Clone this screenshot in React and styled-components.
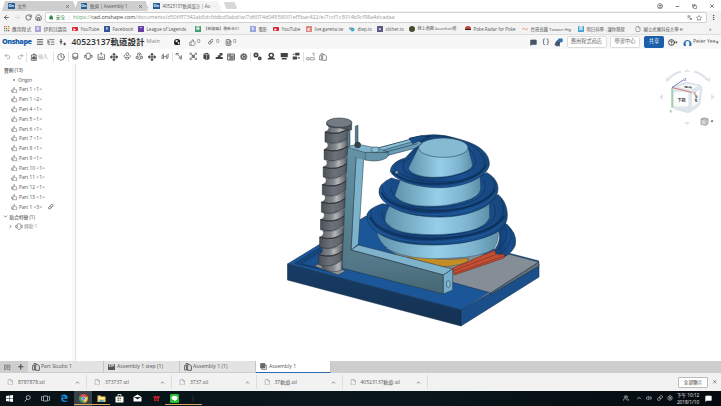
import React from "react";
import styled, { createGlobalStyle } from "styled-components";
import {
  ArrowLeft, ArrowRight, RotateCw, House, Lock, Star, EllipsisVertical, CircleUser, Minus, Copy, X,
  Menu, ListTree, Globe, ThumbsUp, Link, File, FileText, MessageSquare, Braces, CircleQuestionMark,
  Undo2, Redo2, Clock, Move, Settings, Cog, ChevronDown, ChevronRight, ChevronUp, Plus, Search,
  Volume2, Languages, Users,
} from "lucide-react";

const sans = `"Open Sans", "Noto Sans CJK TC", sans-serif`;

const Global = createGlobalStyle`
  * { box-sizing: border-box; }
  html, body { margin: 0; width: 721px; height: 406px; overflow: hidden; }
  body { font-family: ${sans}; font-size: 5.3px; line-height: 1; color: #444; background: #fff; }
`;

const Page = styled.div`
  width: 721px; height: 406px; display: flex; flex-direction: column; overflow: hidden; background: #fff;
`;
const Row = styled.div`
  display: flex; align-items: center; flex: none; white-space: nowrap;
`;
const Slot = styled.div`
  flex: none; width: ${p => p.$w}px; display: flex; align-items: center;
  justify-content: ${p => (p.$center ? "center" : "flex-start")};
  svg { flex: none; }
`;
const Label = styled.span`
  font-size: ${p => p.$size || 5}px; color: ${p => p.$color || "#555"};
  font-weight: ${p => p.$weight || 400}; letter-spacing: ${p => p.$track || 0}px; white-space: nowrap;
`;

/* Browser window */
const TabStrip = styled(Row)` height: 11px; align-items: flex-end; padding-left: 2px; `;
const BrowserTab = styled.div`
  width: 75px; height: 10px; margin-right: -2.5px; padding: 0 7px 0 6px;
  display: flex; align-items: center; gap: 3px;
  background: ${p => (p.$active ? "#f4f4f4" : "#cecece")};
  clip-path: polygon(3px 0, calc(100% - 4px) 0, 100% 100%, 0 100%);
  svg:last-child { margin-left: auto; }
`;
const NewTab = styled.div`
  width: 11px; height: 7px; margin: 0 0 2px 5px; background: #d8d8d8; transform: skewX(20deg); border-radius: 1px;
`;
const WindowControls = styled.div`
  margin-left: auto; height: 10px; display: flex; align-items: center; gap: 12px; padding-right: 6px; color: #333;
`;
const AddressRow = styled(Row)` height: 13px; background: #f3f3f3; padding-left: 3px; color: #444; `;
const AddressField = styled.div`
  width: 662px; height: 11px; display: flex; align-items: center; gap: 2.4px; padding: 0 4px 0 2.5px;
  border: 1px solid #d2d2d2; border-radius: 2px; background: #fff;
`;
const FieldEnd = styled.div` margin-left: auto; display: flex; gap: 4px; align-items: center; `;
const BookmarkRow = styled(Row)` height: 11px; background: #f3f3f3; border-bottom: 1px solid #ddd; padding-left: 4px; `;

const Favicon = styled.span`
  flex: none; width: ${p => p.$s || 5.5}px; height: ${p => p.$h || p.$s || 5.5}px; margin-right: ${p => p.$gap ?? 3}px;
  border-radius: ${p => p.$r ?? 0.5}px; background: ${p => p.$c}; color: ${p => p.$fg || "#fff"};
  display: flex; align-items: center; justify-content: center; font-size: ${p => p.$fs || 4}px; font-weight: 700;
`;

/* Application chrome */
const AppHeader = styled(Row)` height: 14px; background: #f7f7f7; padding-left: 2px; color: #333; `;
const Brand = styled.div` width: 34px; font-size: 7.3px; font-weight: 800; letter-spacing: -0.5px; color: #1b5faa; `;
const HeaderButton = styled.div`
  flex: none; width: ${p => p.$w}px; height: 12px; margin-right: ${p => p.$mr || 0}px; border-radius: 1.5px;
  border: 1px solid ${p => (p.$primary ? "#1b5faa" : "#dcdcdc")};
  background: ${p => (p.$primary ? "#1b5faa" : "#fff")}; color: ${p => (p.$primary ? "#fff" : "#666")};
  display: flex; align-items: center; justify-content: center; font-size: 5.2px;
`;
const ToolRow = styled(Row)` height: 15px; background: #fff; color: #444; `;
const Rule = styled.span` flex: none; width: 1px; height: 10px; background: #e2e2e2; `;

const Work = styled.div` height: 297px; flex: none; display: flex; `;
const Sidebar = styled.aside`
  width: 76px; flex: none; padding-top: 1.5px; border-right: 1px solid #e0e0e0; box-shadow: inset -3px 0 #f7f9fb;
  display: flex; flex-direction: column;
`;
const TreeRow = styled.div`
  height: 9.78px; flex: none; display: flex; align-items: center; gap: 1.5px; padding-left: ${p => p.$indent}px;
  white-space: nowrap;
`;
const OriginDot = styled.span` width: 2px; height: 2px; border-radius: 50%; background: #888; margin-right: 1.5px; `;
const RowMark = styled.span` margin-left: 5px; display: flex; `;
const Viewport = styled.main` flex: 1; min-width: 0; svg { display: block; } `;

const SheetTabs = styled(Row)` height: 12px; background: #cecece; `;
const SheetTab = styled.div`
  width: ${p => p.$w}px; height: 12px; display: flex; align-items: center; gap: 1px; padding-left: 4px; flex: none;
  background: ${p => (p.$active ? "#fff" : "#e3e3e3")}; color: #444;
  border-right: 1px solid #c6c6c6; border-bottom: ${p => (p.$active ? "1.5px solid #2c69ad" : "1px solid #cfcfcf")};
`;
const DownloadBar = styled(Row)` height: 18px; background: #f2f2f2; `;
const Download = styled.div`
  width: ${p => p.$w}px; height: 14px; flex: none; padding: 0 6px 0 7px; display: flex; align-items: center;
  gap: 4.5px; border-right: 1px solid #ddd; color: #777;
  svg:last-child { margin-left: auto; color: #444; }
`;
const ShowAll = styled.div`
  width: 30px; height: 11px; margin: 0 4px 0 auto; border: 1px solid #bbb; border-radius: 1px; background: #fff;
  display: flex; align-items: center; justify-content: center;
`;
const Taskbar = styled(Row)` height: 15px; background: linear-gradient(90deg, #081217, #0a171d 55%, #040a0f); color: #eee; `;
const TaskSlot = styled.div`
  flex: none; width: ${p => p.$w}px; height: 15px; display: flex; align-items: center; justify-content: center;
  background: ${p => (p.$active ? "#3a4247" : "transparent")};
  border-bottom: 1px solid transparent;
  box-shadow: ${p => (p.$open ? "inset 0 -1px #d6a25a" : "none")};
`;
const Tray = styled.div` margin-left: auto; height: 15px; display: flex; align-items: center; `;
const ClockText = styled.div` width: 28px; font-size: 4.7px; line-height: 7px; text-align: center; color: #eee; `;

const PartIcon = ({ s = 6.5, w = 2 }) => (
  <svg width={s} height={s} viewBox="0 0 24 24" fill="none" stroke="#666" strokeWidth={w}>
    <path d="M2 11h6v6H2z M8 11V5l5-4v8l8 2v10H5v-4" />
  </svg>
);
const InsertIcon = () => (
  <svg width="8" height="8" viewBox="0 0 24 24" fill="none" stroke="#444" strokeWidth="2.2">
    <path d="M8 6H4v16h15V6h-4 M12 18V2 M8 6l4-4 4 4" /><path d="M8 12h8v6H8z" fill="#777" />
  </svg>
);
const PagesIcon = ({ color = "#444" }) => (
  <svg width="8" height="8" viewBox="0 0 24 24" fill="none" stroke={color} strokeWidth="2.5">
    <path d="M2 8h6v13H2z M11 5h7l4 4v13H11z M6 6V2h7" />
  </svg>
);
const AssemblyIcon = () => (
  <svg width="7" height="7" viewBox="0 0 24 24" fill="#777" stroke="#444" strokeWidth="2">
    <path d="M2 2h15v15H2z" /><path d="M6 17v5h16V7h-5 M6 7h7 M6 12h7" fill="none" />
  </svg>
);

const mates = {
  cup: "M5 5v10q0 6 7 6t7-6V5 M5 13q7 5 14 0 M5 5q7-4 14 0 M5 17h14",
  ring: "M5 10q0-7 7-7t7 7 M1 10h6v5H1z M17 10h6v5h-6z M7 17v3h10v-3 M12 17v5",
  bracket: "M6 7H3v14h18V7h-3 M12 2v8 M9 5l3-3 3 3 M8 13v4h8v-4",
  ball: "M12 2a4 4 0 1 1 0 8 4 4 0 0 1 0-8 M6 8l-4 4 4 4 M18 8l4 4-4 4 M7 15q0 6 5 6t5-6z",
  slot: "M7 10V5q5-5 10 0v5 M12 5v7 M3 13h6v5H3z M15 13h6v5h-6z M9 21h6",
  tangent: "M3 20V9l4-3v14 M20 4v12l-4 3V8 M7 15l9-4",
  flow: "M3 4h8 M3 4v5 M4 5l14 12 M18 9v8h-8 M17 17v5",
  frame: "M3 8V3h5 M16 3h5v5 M21 16v5h-5 M8 21H3v-5 M5 5l14 14 M19 5L5 19 M9 9h6v6H9z",
};
const solids = {
  cube: "M4 5l11-3 6 4v14l-8 3-9-5z",
  steps: "M2 14h6V9h5V3h8v7h-5v4h6v6H2z",
  stamp: "M12 2a7 7 0 0 1 6 12l-1 3h5v4H2v-4h5l-1-3a7 7 0 0 1 6-12z",
  screen: "M2 3h20v12H2z M5 17h14v4H5z",
  swap: "M9 2h12v8H9z M2 13h12v8H2z M2 5h5v3H2z M16 15h6v3h-6z",
};
const ToolGlyph = ({ name }) => {
  if (name === "table") return (
    <svg width="8" height="8" viewBox="0 0 24 24" fill="none" stroke="#444" strokeWidth="2.6"><path d="M2 3h20v18H2z M2 9h20 M9 3v18 M15 9v12 M9 15h13" /></svg>
  );
  return solids[name] ? (
    <svg width="8.5" height="8.5" viewBox="0 0 24 24">
      <path d={solids[name]} fill="#444" />
      {name === "stamp" && <circle cx="12" cy="9" r="3.5" fill="#fff" />}
      {name === "cube" && <path d="M4 5l9 3v15 M13 8l8-2" stroke="#ddd" fill="none" strokeWidth="2" />}
    </svg>
  ) : (
    <svg width="8.5" height="8.5" viewBox="0 0 24 24" fill="none" stroke="#555" strokeWidth="2.1"><path d={mates[name]} /></svg>
  );
};

const bookmarks = [
  [31, "", "應用程式", 4.8, "apps"], [37, "#a9a2da", "伊莉討論區", 4.7, "E"],
  [32, "#d9232e", "YouTube", 4.6, "play"], [34, "#31549d", "Facebook", 4.7, "f"],
  [57, "#6441a5", "League of Legends", 4.55, "▪"], [55, "#3e9a70", "【新護腦】最新谷01", 3.95, "谷"],
  [23, "#9aa5de", "電影", 4.3, "E"], [33, "#d9232e", "YouTube", 4.6, "play"],
  [43, "#dc8683", "live.garena.tw", 4.45, "g"], [28, "#3caed0", "diep.io", 4.5, "tank"], [32, "#595887", "slither.io", 4.5, "s"],
  [56, "#494d30", "線上遊戲-beanfun!遊", 4.1, "round"], [57, "", "Poke Radar for Poke", 4.45, "ball"],
  [56, "transparent", "台灣高鐵 Taiwan Hig", 4.35, "hsr"], [57, "#49a3cf", "明日科學 - 讓你隨探", 4.35, "目"],
];

const BookmarkIcon = ({ kind, color }) => {
  if (kind === "apps") return (
    <Slot $w={8}>
      <svg width="5.5" height="5.5" viewBox="0 0 11 11">
        {["#d94b3e", "#e8aa3c", "#53a653", "#5387ce", "#d94b3e", "#e8aa3c", "#53a653", "#5387ce", "#d94b3e"].map((c, i) =>
          <rect key={i} x={(i % 3) * 4} y={Math.floor(i / 3) * 4} width="2.6" height="2.6" fill={c} />)}
      </svg>
    </Slot>
  );
  if (kind === "play") return (
    <Favicon $c={color} $h={4.5} $r={1}><svg width="3" height="3" viewBox="0 0 6 6"><path d="M1 0l5 3-5 3z" fill="#fff" /></svg></Favicon>
  );
  if (kind === "tank") return <Slot $w={8.5}><svg width="6" height="5" viewBox="0 0 12 10"><path d="M0 1h6v4H0z" fill="#999" /><circle cx="7" cy="5" r="4" fill={color} /></svg></Slot>;
  if (kind === "hsr") return <Slot $w={8.5}><svg width="6" height="5" viewBox="0 0 12 10"><path d="M0 5q3-4 6-1t6-1" fill="none" stroke="#e0825f" strokeWidth="1.5" /></svg></Slot>;
  if (kind === "ball") return <Favicon $c="linear-gradient(#c34237 45%, #222 45%, #222 60%, #eee 60%)" $r={3} />;
  if (kind === "round") return <Favicon $c={color} $r={3} />;
  return <Favicon $c={color}>{kind}</Favicon>;
};

const parts = ["Part 1 <1>", "Part 1 <2>", "Part 4 <1>", "Part 5 <1>", "Part 6 <1>", "Part 7 <1>", "Part 8 <1>", "Part 9 <1>",
  "Part 10 <1>", "Part 11 <1>", "Part 12 <1>", "Part 13 <1>", "Part 1 <3>"];

const tools = [
  [13, "cup"], [13, "ring"], [12.5, "bracket"], [13, "move"], [12.5, "ball"], [12.5, "slot"], [13, "move"], [13, "tangent"],
  [1, "|"], [13.5, "flow"], [13.5, "frame"], [13, "cube"], [12.5, "steps"], [12.5, "table"], [12.5, "cog"],
  [1, "|"], [13.5, "gears"], [13, "stamp"], [12.5, "screen"], [12.5, "swap"], [1, "|"],
];

const threads = Array.from({ length: 8 }, (_, i) => ({ y: 66 + i * 52.6, l: 135 - i * 2.7, r: 209 - i * 2.7 }));

const Model = () => (
  <svg width="645" height="297" viewBox="76 64 645 297">
    <defs>
      <linearGradient id="cone"><stop offset="0" stopColor="#5f93ab" /><stop offset=".25" stopColor="#7bb0c9" /><stop offset=".5" stopColor="#96cee9" /><stop offset=".8" stopColor="#7db3ce" /><stop offset="1" stopColor="#5c90a8" /></linearGradient>
      <linearGradient id="ring"><stop offset="0" stopColor="#1a5292" /><stop offset=".3" stopColor="#144179" /><stop offset=".72" stopColor="#184f90" /><stop offset="1" stopColor="#16467e" /></linearGradient>
      <linearGradient id="steel"><stop offset="0" stopColor="#4b4f55" /><stop offset=".45" stopColor="#6d727a" /><stop offset=".8" stopColor="#62676f" /><stop offset="1" stopColor="#43474e" /></linearGradient>
      <linearGradient id="core"><stop offset="0" stopColor="#55585d" /><stop offset=".45" stopColor="#85888d" /><stop offset=".62" stopColor="#b4b6b9" /><stop offset="1" stopColor="#505358" /></linearGradient>
      <linearGradient id="post" x2="0" y2="1"><stop offset="0" stopColor="#6593a7" /><stop offset="1" stopColor="#507582" /></linearGradient>
      <linearGradient id="beam" x2="0" y2="1"><stop offset="0" stopColor="#587f8f" /><stop offset="1" stopColor="#466774" /></linearGradient>
      <linearGradient id="front" x2="0" y2="1"><stop offset="0" stopColor="#173c66" /><stop offset="1" stopColor="#153152" /></linearGradient>
    </defs>
    <g strokeLinejoin="round" stroke="#102e4c" strokeWidth=".55">
      <path d="M287.5 264L366 216L539 261L461 310z" fill="#1b5798" />
      <path d="M287.5 264L461 310V326L287.5 280z" fill="url(#front)" />
      <path d="M461 310L539 264V277L461 326z" fill="#1b4f89" />
      <path d="M295 263.5L321 247L331 249V272z" fill="#18477c" />
      <path d="M301 264L321 251V268z" fill="#1a5090" />
      <path d="M314 266l8-4 24 9-8 4z" fill="#8f9395" />
      <path d="M385 248l10-4 45 12 65-3 34 9-48 31-54-15z" fill="#858e96" />
      <path d="M491 293l48-31v4l-49 29z" fill="#686f76" />
    </g>

    <g transform="translate(360 125) scale(.33333)" stroke="#102b44" strokeWidth="1.6" strokeLinejoin="round">
      <path d="M142 389Q230 410 326 400L321 412Q270 430 224 422L145 397z" fill="#c58e24" strokeWidth="1" />
      <path d="M430 290Q476 323 465 363Q456 384 430 397L401 377Q427 348 414 310z" fill="url(#ring)" />
      <path d="M441 297Q474 345 421 388 M432 300Q458 340 407 379" fill="none" />
      <path d="M50 317Q53 350 88 374Q150 407 260 400Q370 397 402 371Q418 349 415 312z" fill="url(#cone)" strokeWidth="1" />
      <path d="M278 430L403 376L410 390L434 387L432 399L283 450z" fill="#c04f35" stroke="#682616" />
      <path d="M278 438L409 388 M281 446L431 393" fill="none" stroke="#7d2a19" />

      <path d="M67 236Q14 254 21 279C27 318 82 348 157 357C278 370 405 342 433 302C450 280 443 231 415 209L350 222L98 241z" fill="url(#ring)" />
      <path d="M30 276C49 325 142 346 230 342C325 340 409 316 432 272" fill="none" stroke="#0e3360" strokeWidth="6" />
      <path d="M34 257C26 303 101 337 205 338C308 342 404 314 424 277Q437 250 424 222" fill="none" strokeWidth="1.6" />
      <path d="M26 288C49 335 142 355 230 351C325 349 409 325 434 286" fill="none" stroke="#255f9e" strokeWidth="2.4" />
      <path d="M66 259C65 303 121 331 213 331C300 332 374 315 398 284Q412 263 402 239" fill="#174c89" />
      <path d="M89 242Q75 263 75 287Q91 318 158 326Q251 335 328 318Q378 306 389 277L388 230z" fill="url(#cone)" strokeWidth="1" />

      <path d="M94 159Q54 177 57 203C61 235 115 265 184 273C275 285 369 264 402 222C425 194 414 162 381 143L337 158L123 167z" fill="url(#ring)" />
      <path d="M64 202C80 241 155 260 225 259C304 260 386 232 405 193" fill="none" stroke="#0e3360" strokeWidth="6" />
      <path d="M68 183C65 222 128 251 206 254C293 260 374 237 397 205Q413 182 397 156" fill="none" strokeWidth="1.6" />
      <path d="M61 211C83 253 155 271 225 269C304 270 386 242 407 205" fill="none" stroke="#255f9e" strokeWidth="2.4" />
      <path d="M93 188C97 226 148 247 220 247C291 248 359 231 373 199Q379 182 371 167" fill="#174d88" />
      <path d="M121 164L104 212Q126 239 187 243Q258 247 315 228Q357 217 362 193L360 147z" fill="url(#cone)" strokeWidth="1" />

      <path d="M149 40Q228 17 292 42C355 55 390 85 388 119C382 156 315 187 238 188C157 188 101 161 91 139Q91 112 137 98L177 55z" fill="url(#ring)" />
      <path d="M98 140C119 165 175 178 238 177C310 176 366 150 379 120" fill="none" stroke="#0e3360" strokeWidth="5" />
      <path d="M172 38Q285 19 347 69Q394 108 361 139C320 172 231 179 170 163Q113 150 104 130Q104 115 134 106" fill="none" strokeWidth="1.6" />
      <path d="M95 146C120 173 176 186 238 185C312 184 370 156 384 124" fill="none" stroke="#255f9e" strokeWidth="2" />
      <path d="M149 101Q118 113 136 141C183 171 299 159 338 130Q360 102 326 70" fill="#174d88" />
      <path d="M176 67L145 130Q151 148 194 155Q247 161 294 147Q333 137 338 121L324 67z" fill="url(#cone)" strokeWidth="1" />
      <ellipse cx="250" cy="68" rx="74" ry="29" fill="#86bad3" strokeWidth="1.5" />
      <circle cx="110" cy="142" r="4.5" fill="#aab8bd" />
      <path d="M47 71L152 43L176 46L186 56L165 70L80 92L48 83z" fill="#6c9eb5" />
      <path d="M47 71L152 43L158 50L54 80z" fill="#8abfd6" />
      <path d="M66 84L172 56" fill="none" />
      <path d="M147 40L184 32L207 36L158 56z" fill="#174d88" />
    </g>

    <g transform="translate(280 110) scale(.33333)" stroke="#26343e" strokeWidth="1.6" strokeLinejoin="round">
      <path d="M153 48L203 52L185 479Q158 495 126 473z" fill="url(#core)" />
      {threads.map((t, i) => (
        <g key={i}>
          <path d={`M${t.l + 9} ${t.y - 20}Q${t.l + 40} ${t.y - 12} ${t.r - 5} ${t.y - 28}L${t.r} ${t.y - 12}Q${t.l + 38} ${t.y + 12} ${t.l} ${t.y}Q${t.l + 17} ${t.y - 8} ${t.l + 9} ${t.y - 20}z`} fill="url(#core)" strokeWidth=".7" />
          <path d={`M${t.l} ${t.y}Q${t.l + 43} ${t.y + 13} ${t.r} ${t.y - 13}L${t.r - 3} ${t.y + 15}Q${t.l + 39} ${t.y + 42} ${t.l} ${t.y + 30}z`} fill="url(#steel)" />
          <path d={`M${t.l} ${t.y}Q${t.l + 43} ${t.y + 13} ${t.r} ${t.y - 13}`} fill="none" stroke="#303338" strokeWidth="3" />
        </g>
      ))}
      <path d="M140 38V45Q153 54 180 54L215 60V38z" fill="#4f545c" />
      <ellipse cx="178" cy="38" rx="38" ry="14" fill="#737b83" />
      <path d="M202 65l8-5v52h-8z M226 49l8-3v55h-8z" fill="#547f94" />
      <path d="M228 142L251 147L235 402L212 422z" fill="#7db2cb" />
      <path d="M203 112L257 127L255 150L228 142L215 422L188 475L186 463z" fill="url(#post)" stroke="none" />
      <path d="M203 112L186 463L188 475 M228 142L213 422" fill="none" />
      <path d="M203 112L216 106L240 104L285 113L325 126L257 128z" fill="#81b5cd" />
      <path d="M257 127H325V138Q314 153 278 153L255 150z" fill="#6494aa" />
      <path d="M273 118L280 111H293L298 119L292 127H278z" fill="#8abed5" />
      <circle cx="233" cy="105" r="9" fill="#394149" />
      <path d="M213 420L235 405L518 477L490 495z" fill="#7fb2cb" />
      <path d="M188 475L213 420L490 495V552L190 475z" fill="url(#beam)" stroke="none" />
      <path d="M213 420L490 495V552L188 475" fill="none" />
      <path d="M490 495L518 477V540L490 552z" fill="#77aeca" />
      <ellipse cx="505" cy="522" rx="6" ry="10" fill="#8abed5" />
    </g>

    <g fill="none" stroke="#dce3ea" strokeWidth="2.2">
      <path d="M668 80Q672 74 681 71.5 M694 71.5Q703 74 707 80" />
    </g>
    <g fill="#dfe6eb">
      <path d="M687 69l3 3h-6z M687 125l3-3h-6z M659 97l4-3v6z M715 97l-4-3v6z M666 77v5l4-2z M710 77v5l-4-2z" />
      <path d="M672 88q0-1 3-2l11-4 14 3q2 1 2 4l-2 15q-1 2-4 4l-6 4q-2 1-5 0l-10-3q-3-1-3-4z" stroke="#ccd5db" strokeWidth=".5" />
      <rect x="674" y="92" width="14.5" height="14.5" rx="2" fill="#fbfcfc" />
      <path d="M692 94l8-4-2 13-6 4z M678 87l9-3 11 2-7 4z" fill="#fbfcfc" />
    </g>
    <path d="M672 88v20" stroke="#42ad4e" strokeWidth=".7" /><path d="M672 87.5l20 5" stroke="#c64842" strokeWidth=".7" /><path d="M672 87.5l12-8" stroke="#4750b7" strokeWidth=".7" />
    <g fontFamily={sans} fontWeight="600" fontSize="4">
      <text x="677.5" y="101.5" fill="#333">下視</text>
      <text transform="translate(684 87.5) rotate(6) scale(1 .55)" fill="#333">後視</text>
      <text transform="translate(695.3 98) rotate(-10) scale(.6 1)" fill="#333">右</text>
      <text transform="translate(695 102) rotate(-10) scale(.6 1)" fill="#333">視</text>
      <text x="693.5" y="95" fill="#c64842">X</text><text x="669.5" y="112.5" fill="#42ad4e">Y</text><text x="684" y="80.5" fill="#4750b7">Z</text>
    </g>
    <path d="M701 119l3-1.2 4 1v5l-2 1.5-5-1z" fill="#d5d6d6" stroke="#777" strokeWidth=".6" />
    <path d="M701 119l5 1v5 M706 120l2-1.2" fill="none" stroke="#888" strokeWidth=".5" />
    <path d="M710.5 120.5h3l-1.5 2z" fill="#555" />
  </svg>
);

const OnLogo = () => <Favicon $c="#206099" $s={6.5} $gap={0} $fs={3.8}>On</Favicon>;

export default function App() {
  return (
    <Page>
      <Global />
      <TabStrip>
        <BrowserTab><OnLogo /><Label $size={4.5}>文件</Label><X size={5} strokeWidth={2.5} /></BrowserTab>
        <BrowserTab><OnLogo /><Label $size={4.5}>軌道 | Assembly 1</Label><X size={5} strokeWidth={2.5} /></BrowserTab>
        <BrowserTab $active><OnLogo /><Label $size={4.4}>40523137軌道設計 | As:</Label><X size={5} strokeWidth={2.5} /></BrowserTab>
        <NewTab />
        <WindowControls><CircleUser size={6} /><Minus size={5} strokeWidth={3} /><Copy size={5} strokeWidth={2.5} /><X size={6} strokeWidth={2.5} /></WindowControls>
      </TabStrip>

      <AddressRow>
        <Slot $w={11}><ArrowLeft size={7} strokeWidth={2.5} /></Slot>
        <Slot $w={11}><ArrowRight size={7} color="#ccc" /></Slot>
        <Slot $w={10}><RotateCw size={7} strokeWidth={2.5} /></Slot>
        <Slot $w={10}><House size={7} strokeWidth={2.5} /></Slot>
        <AddressField>
          <Lock size={4.5} color="#2a8847" fill="#2a8847" />
          <Label $color="#2a8847">安全</Label><Label $color="#ccc">|</Label>
          <Label $size={5.36} $color="#999"><Label $size={5.36} $color="#5aa572">https</Label>://<Label $size={5.36} $color="#444">cad.onshape.com</Label>/documents/d506ff7342ab8dcfddbd3abd/w/7d6074d04558001ef5bac422/e/7ccf1c3014b9cf98a4dcadaa</Label>
          <FieldEnd><Languages size={5.5} /><Star size={6} /></FieldEnd>
        </AddressField>
        <Slot $w={13} $center><EllipsisVertical size={7} strokeWidth={2.5} /></Slot>
      </AddressRow>

      <BookmarkRow>
        {bookmarks.map(([w, c, text, size, kind], i) => (
          <Slot $w={w} key={i}><BookmarkIcon kind={kind} color={c} /><Label $size={size}>{text}</Label></Slot>
        ))}
        <Slot $w={74}><Slot $w={8.5}><File size={6} color="#666" /></Slot><Label $size={4.4}>國立虎尾科技大學 e:</Label></Slot>
        <Label>»</Label>
      </BookmarkRow>

      <AppHeader>
        <Brand>Onshape</Brand>
        <Slot $w={11}><Menu size={8} strokeWidth={2.5} /></Slot>
        <Slot $w={12}><ListTree size={8} /></Slot>
        <Slot $w={13}>
          <svg width="8" height="8" viewBox="0 0 24 24" fill="none" stroke="#333" strokeWidth="2.8"><path d="M6 3v16 M2 11h8 M17 14v8 M13 18h8" /></svg>
        </Slot>
        <Slot $w={75}><Label $size={8.5} $weight={600} $color="#333">40523137軌道設計</Label></Slot>
        <Slot $w={27}><Label $size={5.8} $color="#888">Main</Label></Slot>
        <Slot $w={15}>
          <svg width="6.5" height="6.5" viewBox="0 0 20 20"><circle cx="10" cy="10" r="10" fill="#1d2226" /><path d="M5 4l6-1 1 4-4 3-3-1z M11 11l5-2 1 4-4 4z" fill="#eee" /></svg>
        </Slot>
        <Slot $w={19}><ThumbsUp size={7} color="#666" /><Label $size={5.8}>&nbsp;0</Label></Slot>
        <Slot $w={17}><Link size={5.5} strokeWidth={2.8} /><Label $size={5.8}>&nbsp;&nbsp;0</Label></Slot>
        <Slot $w={305}><FileText size={7} /><Label $size={5.8}>&nbsp;0</Label></Slot>
        <Slot $w={12}><MessageSquare size={7} fill="#455666" color="#455666" /></Slot>
        <Slot $w={12}><Braces size={7.5} strokeWidth={2.5} color="#455666" /></Slot>
        <Slot $w={13}>
          <svg width="9" height="9" viewBox="0 0 24 24"><path d="M1 17L7 7l6-3 4 6-2 10H9z" fill="#455666" /><rect x="11" y="1" width="12" height="10" rx="2" fill="#2d76b4" /><path d="M2 19h14v3H5z" fill="#455666" /></svg>
        </Slot>
        <HeaderButton $w={40} $mr={3.5}>應用程式商店</HeaderButton>
        <HeaderButton $w={30} $mr={4}>學習中心</HeaderButton>
        <HeaderButton $w={20} $mr={4} $primary>共享</HeaderButton>
        <Slot $w={15}><CircleQuestionMark size={7} strokeWidth={3} /><Label $size={5}>▾</Label></Slot>
        <Slot $w={10}>
          <svg width="9" height="9" viewBox="0 0 18 18"><path d="M2 16A8 8 0 1 1 16 16h-4q3-10-3-10t-3 10z" fill="#216ab0" /></svg>
        </Slot>
        <Slot $w={28}><Label $size={5.1}>Peter Yee</Label><Label $size={5}>▾</Label></Slot>
      </AppHeader>

      <ToolRow>
        <Slot $w={14} $center><Undo2 size={7} color="#888" /></Slot>
        <Slot $w={12} $center><Redo2 size={7} color="#888" /></Slot>
        <Rule />
        <Slot $w={26}><Slot $w={3} /><InsertIcon /><Label $color="#aaa">插入</Label></Slot>
        <Rule />
        <Slot $w={14} $center><Clock size={8} /></Slot>
        <Rule />
        {tools.map(([w, n], i) => n === "|" ? <Rule key={i} /> : (
          <Slot $w={w} $center key={i}>
            {n === "move" ? <Move size={8} strokeWidth={3.2} /> : n === "cog" ? <Cog size={7.5} strokeWidth={3.5} color="#666" />
              : n === "gears" ? (
                <svg width="9" height="9" viewBox="0 0 24 24" fill="none" stroke="#444"><circle cx="8" cy="8" r="4.5" strokeWidth="4.5" /><circle cx="18" cy="17" r="3" strokeWidth="4" /></svg>
              ) : <ToolGlyph name={n} />}
          </Slot>
        ))}
        <Slot $w={13} $center>
          <svg width="9" height="9" viewBox="0 0 24 24" fill="none" stroke="#888" strokeWidth="2"><path d="M2 15h6v6H2z M11 15h11v6H11z M21 2v9 M17 4h4" /></svg>
        </Slot>
        <Slot $w={13} $center><PagesIcon color="#777" /></Slot>
      </ToolRow>

      <Work>
        <Sidebar>
          <TreeRow $indent={4}><Label $size={4.7} $color="#222">實例 (13)</Label></TreeRow>
          <TreeRow $indent={13}><OriginDot /><Label $size={4.95}>Origin</Label></TreeRow>
          {parts.map((p, i) => (
            <TreeRow key={i} $indent={11}>
              <PartIcon /><Label $size={4.85}>{p}</Label>
              {i === 12 && <RowMark><Link size={5.5} strokeWidth={3} /></RowMark>}
            </TreeRow>
          ))}
          <TreeRow $indent={3}><ChevronDown size={5} strokeWidth={3} /><Label $size={4.7} $color="#333">貼合特徵 (1)</Label></TreeRow>
          <TreeRow $indent={8}><ChevronRight size={5} strokeWidth={3} />
            <svg width="8" height="7" viewBox="0 0 24 21" fill="none" stroke="#777" strokeWidth="2"><path d="M5 8q0-6 7-6t7 6 M5 13q0 6 7 6t7-6 M1 8h6v5H1z M17 8h6v5h-6z" /></svg>
            <Label $size={4.7} $color="#999">轉動 1</Label>
          </TreeRow>
        </Sidebar>
        <Viewport><Model /></Viewport>
      </Work>

      <SheetTabs>
        <Slot $w={14} $center>
          <svg width="7" height="7" viewBox="0 0 24 24" fill="none" stroke="#555" strokeWidth="2.2"><path d="M2 4h18v8 M2 4v15h6 M6 9h6 M6 13h4" /><circle cx="15" cy="15" r="4" /><path d="M18 18l4 4" /></svg>
        </Slot>
        <Slot $w={14} $center><Plus size={7.5} strokeWidth={3.5} color="#444" /></Slot>
        <SheetTab $w={76}><PagesIcon /><Label $size={5.15}>Part Studio 1</Label></SheetTab>
        <SheetTab $w={76}><Favicon $c="#555" $s={7} $h={6} $gap={1} $fs={3}>STP</Favicon><Label $size={5.15}>Assembly 1 step (1)</Label></SheetTab>
        <SheetTab $w={76}><PagesIcon /><Label $size={5.15}>Assembly 1 (1)</Label></SheetTab>
        <SheetTab $w={75} $active><AssemblyIcon /><Slot $w={0} /><Label $size={5.15}>Assembly 1</Label></SheetTab>
      </SheetTabs>

      <DownloadBar>
        {[[87, "8787878.stl"], [85, "373737.stl"], [84.5, "3737.stl"], [86, "37軌道.stl"], [85.5, "40523137軌道.stl"]].map(([w, t]) => (
          <Download key={t} $w={w}><File size={6.5} strokeWidth={1.5} /><Label $size={5}>{t}</Label><ChevronUp size={5} strokeWidth={3} /></Download>
        ))}
        <ShowAll><Label $size={4.6} $color="#333">全部顯示</Label></ShowAll>
        <Slot $w={9}><X size={5.5} strokeWidth={2.5} /></Slot>
      </DownloadBar>

      <Taskbar>
        <TaskSlot $w={18}><svg width="7" height="7" viewBox="0 0 14 14"><path d="M0 2l6-1v5.500H0z M7 .8L14 0v6.500H7z M0 7.500h6V13l-6-1z M7 7.500h7V14l-7-1z" fill="#fff" /></svg></TaskSlot>
        <TaskSlot $w={18}><svg width="7" height="7" viewBox="0 0 14 14" fill="none" stroke="#ddd" strokeWidth="1.4"><circle cx="8.500" cy="5" r="4" /><path d="M6 8l-5 5" /></svg></TaskSlot>
        <TaskSlot $w={18}><svg width="9" height="7" viewBox="0 0 18 14" fill="none" stroke="#ccc" strokeWidth="1.5"><path d="M5 2h8v10H5z M3 3H1v8h2 M15 3h2v8h-2" /></svg></TaskSlot>
        <TaskSlot $w={20}>
          <svg width="8" height="8" viewBox="0 0 20 20"><path fillRule="evenodd" d="M1 9C2-1 18-2 19 8v4H7q0 5 6 5 3 0 5-1v3q-3 1-6 1Q2 20 3 11q1-4 6-5Q4 5 1 9z M7 9h6q0-3-3-3T7 9z" fill="#1689e0" /></svg>
        </TaskSlot>
        <TaskSlot $w={18} $active $open>
          <svg width="9" height="9" viewBox="0 0 20 20"><path d="M10 10L2 4a10 10 0 0 1 17 1z" fill="#d84a3d" /><path d="M10 10l9-5q3 13-9 15z" fill="#f0c445" /><path d="M10 10v10A10 10 0 0 1 2 4z" fill="#4a9c55" /><circle cx="10" cy="10" r="4.5" fill="#eee" /><circle cx="10" cy="10" r="3.3" fill="#4d86d8" /></svg>
        </TaskSlot>
        <TaskSlot $w={18} $open><svg width="9" height="9" viewBox="0 0 18 18"><path d="M1 3h6l2 2h8v11H1z" fill="#f2cd65" /><path d="M3 7h12v3H3z" fill="#fff1b4" /><path d="M5 12h8v4H5z" fill="#5ba4c6" /></svg></TaskSlot>
        <TaskSlot $w={18}><svg width="9" height="9" viewBox="0 0 18 18"><path d="M1 5h16v12H1z" fill="#fff" /><path d="M6 5V1h6v4" fill="none" stroke="#fff" strokeWidth="1.5" /><path d="M5 7h3v3H5z" fill="#d84a3d" /><path d="M9 7h3v3H9z" fill="#4a9c55" /><path d="M5 11h3v3H5z" fill="#397cc8" /><path d="M9 11h3v3H9z" fill="#e3b33d" /></svg></TaskSlot>
        <TaskSlot $w={19}><svg width="9" height="8" viewBox="0 0 18 16"><path d="M1 6l8-5 8 5v9H1z" fill="#fff" /><path d="M2 6h14l-7 5z" fill="#263036" /></svg></TaskSlot>
        <TaskSlot $w={18}><svg width="7" height="7" viewBox="0 0 16 16"><path d="M1 2h5l2 2 2-2h5v5l-2 2 1 4-4 2-2-3-3 3-3-3 1-4-2-2z" fill="#bd202a" /><path d="M5 7l3 2 3-2v4H5z" fill="#491116" /></svg></TaskSlot>
        <TaskSlot $w={19} $open><svg width="9" height="9" viewBox="0 0 20 20"><rect width="20" height="20" rx="3" fill="#23bf35" /><path d="M10 4c9 0 9 8 2 11l-2 2v-3C1 14 1 4 10 4" fill="#fff" /></svg></TaskSlot>
        <TaskSlot $w={18} $open><svg width="4" height="8" viewBox="0 0 8 16"><path d="M3 1h2v8l2 2-3 4-3-4 2-2z" fill="#23292d" /></svg></TaskSlot>
        <Tray>
          <TaskSlot $w={14}><Users size={6} /></TaskSlot><TaskSlot $w={12}><ChevronUp size={6} strokeWidth={2.5} /></TaskSlot>
          <TaskSlot $w={8}><Volume2 size={6} /></TaskSlot><TaskSlot $w={13}><Link size={6} strokeWidth={2.5} /></TaskSlot><TaskSlot $w={8}><Settings size={6} /></TaskSlot>
          <ClockText>下午 10:12<br />2018/1/10</ClockText>
          <TaskSlot $w={13}><MessageSquare size={7} fill="#fff" /></TaskSlot><Slot $w={6} />
        </Tray>
      </Taskbar>
    </Page>
  );
}
